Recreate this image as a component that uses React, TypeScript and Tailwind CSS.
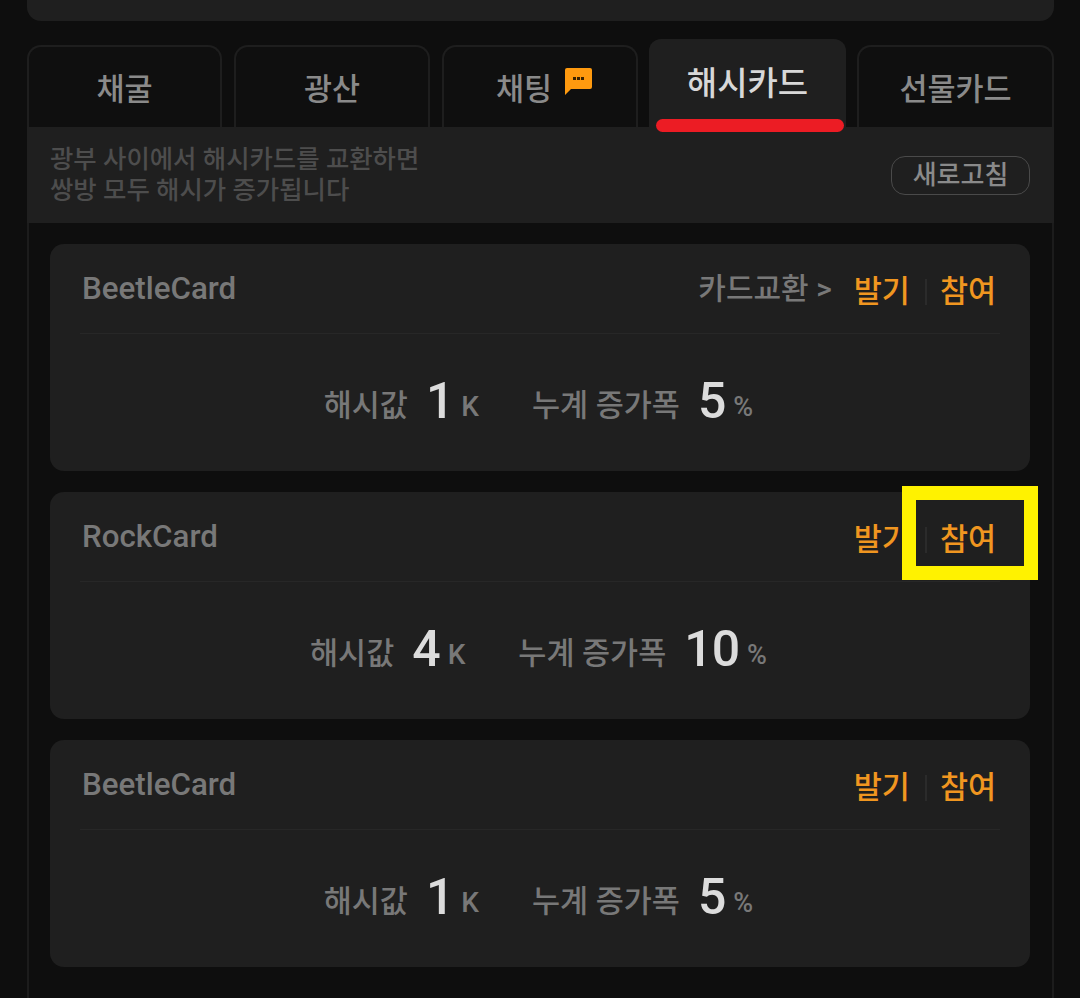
import React from 'react';

const KR = "font-['Roboto','Noto_Sans_CJK_KR','Noto_Sans',sans-serif]";

const tabs = [
  { label: '채굴', size: 'w-[195px] mr-[12px]' },
  { label: '광산', size: 'w-[196px] mr-[12px]' },
  { label: '채팅', size: 'w-[196px] mr-[11px] pl-[8px]' },
  { label: '해시카드', size: 'w-[197px] mr-[11px]' },
  { label: '선물카드', size: 'w-[197px]' },
];

const cards = [
  { name: 'BeetleCard', hash: '1', total: '5', exchange: true },
  { name: 'RockCard', hash: '4', total: '10', exchange: false },
  { name: 'BeetleCard', hash: '1', total: '5', exchange: false },
];

const ChatBadge = () => (
  <svg className="w-[27px] h-[27px] ml-[13px] mt-[-18px]" viewBox="0 0 27 27">
    <path d="M2 0h23a2 2 0 0 1 2 2v17a2 2 0 0 1-2 2H6l-6 6V2a2 2 0 0 1 2-2z" fill="#ff9a0f" />
    <rect x="8" y="9" width="3" height="3" fill="#3a2200" />
    <rect x="12" y="9" width="3" height="3" fill="#3a2200" />
    <rect x="16" y="9" width="3" height="3" fill="#3a2200" />
  </svg>
);

const Tab = ({ label, size, active }: { label: string; size: string; active: boolean }) => {
  if (active) {
    return (
      <div className={`${size} relative h-[88px] -mt-[6px] rounded-t-[12px] bg-[#1f1f1f] flex justify-center pt-[25px] text-[33px] leading-[40px] font-medium text-[#d8d8d8]`}>
        {label}
        <div className="absolute left-[7px] right-[2px] bottom-[-5px] h-[13px] rounded-full bg-[#ec1c24]" />
      </div>
    );
  }
  return (
    <div className={`${size} h-[82px] rounded-t-[14px] border-2 border-b-0 border-[#1e1e1e] bg-[#0f0f0f] flex items-center justify-center pt-[6px] text-[30.5px] font-medium text-[#8a8a8a]`}>
      {label}
      {label === '채팅' && <ChatBadge />}
    </div>
  );
};

const HashCard = ({ name, hash, total, exchange }: (typeof cards)[number]) => (
  <div className="h-[227px] rounded-[14px] bg-[#1f1f1f] px-[30px] flex flex-col">
    <div className="h-[90px] border-b border-[#272727] pl-[2px] pr-[4px] flex items-center">
      <span className="text-[31.3px] font-medium text-[#787878] mt-[1px]">{name}</span>
      <div className="ml-auto flex items-center mt-[6px] text-[30.5px] leading-[40px] font-medium">
        {exchange && <span className="mr-[22px] text-[30px] text-[#787878] mt-[-6px]">카드교환 &gt;</span>}
        <span className="text-[#f09620]">발기</span>
        <span className="ml-[15px] mr-[13px] h-[26px] w-[2px] bg-[#2b2b2b]" />
        <span className="text-[#f09620]">참여</span>
      </div>
    </div>
    <div className="flex justify-center items-baseline pt-[37px] pr-[3px] leading-[56px] text-[#787878] font-medium">
      <span className="text-[30.5px]">해시값</span>
      <span className="ml-[18px] text-[50px] tracking-[-1px] translate-y-[2px] text-[#dcdcdc]">{hash}</span>
      <span className="ml-[8px] text-[28px]">K</span>
      <span className="ml-[53px] text-[30.5px]">누계 증가폭</span>
      <span className="ml-[18px] text-[50px] tracking-[-1px] translate-y-[2px] text-[#dcdcdc]">{total}</span>
      <span className="ml-[8px] text-[27px]">%</span>
    </div>
  </div>
);

export default function App() {
  return (
    <div className={`${KR} relative w-[1080px] h-[998px] overflow-hidden bg-[#0e0e0e]`}>
      <div className="mx-[27px] w-[1027px]">
        <div className="h-[21px] rounded-b-[14px] bg-[#1f1f1f]" />

        <div className="mt-[24px] flex items-start">
          {tabs.map((t) => (
            <Tab key={t.label} label={t.label} size={t.size} active={t.label === '해시카드'} />
          ))}
        </div>

        <div className="h-[96px] bg-[#1f1f1f] pl-[23px] pr-[24px] flex items-center justify-between">
          <p className="text-[25.4px] leading-[31px] font-medium text-[#4d4d4d]">
            광부 사이에서 해시카드를 교환하면
            <br />
            쌍방 모두 해시가 증가됩니다
          </p>
          <button className="w-[139px] h-[39px] rounded-[14px] border border-[#4a4a4a] text-[26px] leading-[36px] font-medium text-[#8a8a8a]">
            새로고침
          </button>
        </div>

        <div className="h-[775px] border-x-2 border-[#1c1c1c] bg-[#0e0e0e] pl-[21px] pr-[22px] pt-[21px] flex flex-col gap-[21px]">
          {cards.map((c, i) => (
            <HashCard key={i} {...c} />
          ))}
        </div>
      </div>

      <div className="absolute left-[902px] top-[486px] w-[136px] h-[94px] border-[14px] border-[#fff200]" />
    </div>
  );
}
